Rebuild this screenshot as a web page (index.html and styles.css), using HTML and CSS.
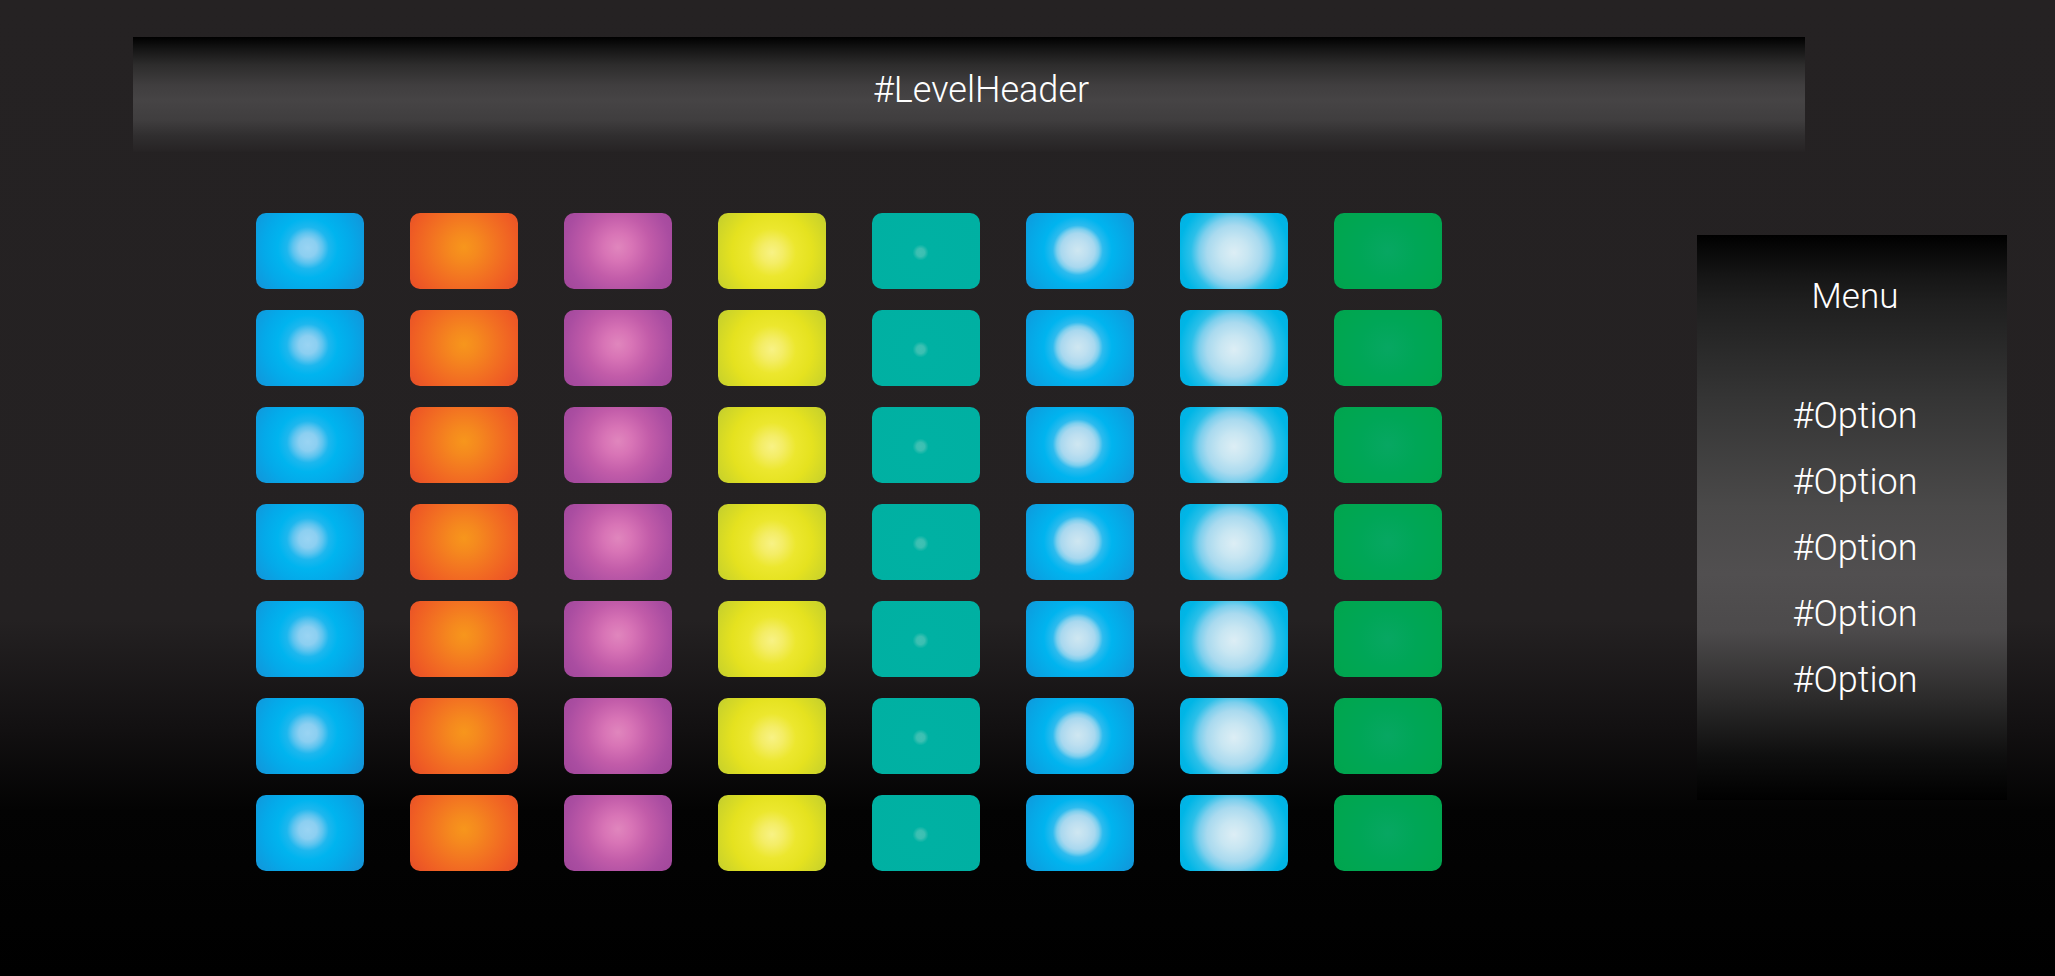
FILE: index.html
```html
<!DOCTYPE html>
<html lang="en">
<head>
<meta charset="utf-8">
<title>Level Select</title>
<link rel="stylesheet" href="styles.css">
</head>
<body>
<div class="page">
  <header class="level-header">#LevelHeader</header>
  <div class="content">
    <div class="pad-grid">
      <div class="pad c1"></div><div class="pad c2"></div><div class="pad c3"></div><div class="pad c4"></div><div class="pad c5"></div><div class="pad c6"></div><div class="pad c7"></div><div class="pad c8"></div>
      <div class="pad c1"></div><div class="pad c2"></div><div class="pad c3"></div><div class="pad c4"></div><div class="pad c5"></div><div class="pad c6"></div><div class="pad c7"></div><div class="pad c8"></div>
      <div class="pad c1"></div><div class="pad c2"></div><div class="pad c3"></div><div class="pad c4"></div><div class="pad c5"></div><div class="pad c6"></div><div class="pad c7"></div><div class="pad c8"></div>
      <div class="pad c1"></div><div class="pad c2"></div><div class="pad c3"></div><div class="pad c4"></div><div class="pad c5"></div><div class="pad c6"></div><div class="pad c7"></div><div class="pad c8"></div>
      <div class="pad c1"></div><div class="pad c2"></div><div class="pad c3"></div><div class="pad c4"></div><div class="pad c5"></div><div class="pad c6"></div><div class="pad c7"></div><div class="pad c8"></div>
      <div class="pad c1"></div><div class="pad c2"></div><div class="pad c3"></div><div class="pad c4"></div><div class="pad c5"></div><div class="pad c6"></div><div class="pad c7"></div><div class="pad c8"></div>
      <div class="pad c1"></div><div class="pad c2"></div><div class="pad c3"></div><div class="pad c4"></div><div class="pad c5"></div><div class="pad c6"></div><div class="pad c7"></div><div class="pad c8"></div>
    </div>
    <nav class="menu">
      <div class="menu-title">Menu</div>
      <ul class="menu-list">
        <li>#Option</li>
        <li>#Option</li>
        <li>#Option</li>
        <li>#Option</li>
        <li>#Option</li>
      </ul>
    </nav>
  </div>
</div>
</body>
</html>
```
FILE: styles.css
```css
html, body {
  margin: 0;
  padding: 0;
}
body {
  width: 2055px;
  height: 976px;
  overflow: hidden;
  background: #000;
  font-family: Roboto, "Liberation Sans", sans-serif;
  color: #fff;
}
.page {
  width: 2055px;
  height: 976px;
  box-sizing: border-box;
  padding-top: 37px;
  background: linear-gradient(to bottom, #252223 0, #242122 620px, #121011 730px, #030303 810px, #000 100%);
}
.level-header {
  margin-left: 133px;
  width: 1672px;
  height: 115px;
  box-sizing: border-box;
  padding-bottom: 9px;
  padding-left: 24px;
  line-height: 106px;
  text-align: center;
  font-size: 36px;
  font-weight: 300;
  background: linear-gradient(to bottom, #000 0%, #141414 10%, #2d2c2c 24%, #403e3f 42%, #464445 55%, #403e3f 72%, #302e2f 86%, #262324 100%);
}
.content {
  display: flex;
  align-items: flex-start;
  margin-top: 61px;
}
.pad-grid {
  margin-left: 256px;
  display: grid;
  grid-template-columns: repeat(8, 108px);
  grid-auto-rows: 76px;
  column-gap: 46px;
  row-gap: 21px;
}
.pad {
  border-radius: 10px;
}
.c1 {
  background: radial-gradient(circle at 48% 46%, #9ad4f3 0, #8ccff1 9px, #5ec4ef 15px, #1db7ee 21px, #00b4ef 30px, #04a9e9 44px, #1592d7 68px);
}
.c2 {
  background: radial-gradient(circle at 50% 45%, #f7961c 0, #f5891e 14px, #f26f22 36px, #ef5d24 52px, #e3472a 74px);
}
.c3 {
  background: radial-gradient(circle at 50% 45%, #e086bd 0, #d874b6 14px, #c25ca9 32px, #aa4da1 52px, #9d4498 74px);
}
.c4 {
  background: radial-gradient(circle at 50% 52%, #f8f285 0, #f4ed66 11px, #ece72e 24px, #e5e21f 40px, #cbd32a 60px, #a8b43a 80px);
}
.c5 {
  background: radial-gradient(circle at 45% 52%, #40c1b4 0, #3bbfb2 4px, #1cb8aa 6px, #00b1a3 8px, #00b0a2 100%);
}
.c6 {
  background: radial-gradient(circle at 48% 49%, #cfe7f1 0, #bddff0 10px, #a8d8ef 17px, #7ecfee 21px, #2dbbee 25px, #00b4ef 34px, #07a6e5 50px, #1590d6 72px);
}
.c7 {
  background: radial-gradient(circle at 50% 52%, #ddeef5 0, #c8e6f2 14px, #a9daef 27px, #7ccfed 35px, #2cc0e9 43px, #00b6e6 55px, #06abe0 75px);
}
.c8 {
  background: radial-gradient(circle at 50% 50%, #07a762 0, #00a657 28px, #00a650 52px, #00a24d 75px);
}
.menu {
  margin-left: 255px;
  margin-top: 22px;
  width: 310px;
  height: 565px;
  box-sizing: border-box;
  padding-top: 41px;
  padding-left: 6px;
  text-align: center;
  background: linear-gradient(to bottom, #000 0%, #151515 7%, #1f1f1f 12%, #353535 29%, #4a4949 48%, #514f50 60%, #4c4a4b 70%, #2c2b2b 82%, #0f0f0f 92%, #000 100%);
}
.menu-title {
  font-size: 35px;
  font-weight: 300;
  line-height: 41px;
}
.menu-list {
  list-style: none;
  margin: 66px 0 0;
  padding: 0;
}
.menu-list li {
  font-size: 36px;
  font-weight: 300;
  line-height: 66px;
}
```
